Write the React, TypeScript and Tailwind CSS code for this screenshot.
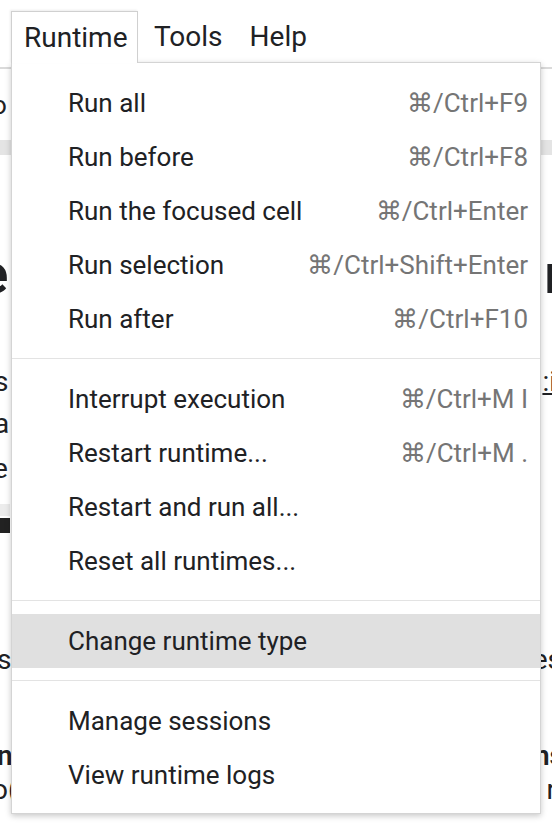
import React from "react";

type Item = { label: string; shortcut?: string; active?: boolean };

const groups: Item[][] = [
  [
    { label: "Run all", shortcut: "⌘/Ctrl+F9" },
    { label: "Run before", shortcut: "⌘/Ctrl+F8" },
    { label: "Run the focused cell", shortcut: "⌘/Ctrl+Enter" },
    { label: "Run selection", shortcut: "⌘/Ctrl+Shift+Enter" },
    { label: "Run after", shortcut: "⌘/Ctrl+F10" },
  ],
  [
    { label: "Interrupt execution", shortcut: "⌘/Ctrl+M I" },
    { label: "Restart runtime...", shortcut: "⌘/Ctrl+M ." },
    { label: "Restart and run all..." },
    { label: "Reset all runtimes..." },
  ],
  [{ label: "Change runtime type", active: true }],
  [{ label: "Manage sessions" }, { label: "View runtime logs" }],
];

function Row({ left, right, className }: { left?: React.ReactNode; right?: React.ReactNode; className: string }) {
  return (
    <div className={`flex justify-between items-center text-[#202124] ${className}`}>
      <div>{left}</div>
      <div>{right}</div>
    </div>
  );
}

export default function App() {
  return (
    <div className="relative w-[552px] h-[828px] overflow-hidden bg-white font-['Roboto','Liberation_Sans',sans-serif]">
      {/* background page */}
      <div className="flex flex-col">
        <div className="h-[69px] border-b-[2px] border-[#dadada] flex items-start pl-[11px] pt-[11px]">
          <div className="relative z-20 h-[52px] w-[127px] bg-white border border-b-0 border-[#d0d0d0] shadow-[-1px_-1px_2px_rgba(0,0,0,0.08)] flex items-center pl-[12px] text-[28px] text-[#202124] leading-none">
            Runtime
          </div>
          <div className="h-[51px] flex items-center ml-[16px] text-[28px] text-[#202124] leading-none">Tools</div>
          <div className="h-[51px] flex items-center ml-[27px] text-[28px] text-[#202124] leading-none">Help</div>
        </div>
        <div className="h-[23px]" />
        <Row className="h-[26px] text-[26px] leading-none" left={<span className="-ml-[8px]">o</span>} />
        <div className="h-[22px]" />
        <div className="h-[15px] bg-[#e4e4e4]" />
        <div className="h-[97px]" />
        <Row
          className="h-[44px] text-[56px] font-bold leading-none"
          left={<span className="block -ml-[22px]">e</span>}
          right={<span className="block -mr-[24px]">n</span>}
        />
        <div className="h-[73px]" />
        <Row
          className="h-[26px] text-[28px] leading-none"
          left={<span className="block -ml-[6px]">s</span>}
          right={<span className="block -mr-[4px] underline">:i</span>}
        />
        <div className="h-[16px]" />
        <Row className="h-[26px] text-[28px] leading-none" left={<span className="block -ml-[6px]">a</span>} />
        <div className="h-[19px]" />
        <Row className="h-[26px] text-[28px] leading-none" left={<span className="block -ml-[7px]">e</span>} />
        <div className="h-[22px]" />
        <div className="h-[12px] w-[10px] bg-[#ececec]" />
        <div className="h-[2px]" />
        <div className="h-[15px] w-[10px] bg-[#222222]" />
        <div className="h-[114px]" />
        <Row
          className="h-[26px] text-[28px] leading-none"
          left={<span className="block -ml-[3px]">sc</span>}
          right={<span className="block -mr-[10px]">es</span>}
        />
        <div className="h-[70px]" />
        <Row
          className="h-[26px] text-[28px] font-semibold leading-none"
          left={<span className="block -ml-[3px]">ng</span>}
          right={<span className="block -mr-[12px]">ns</span>}
        />
        <div className="h-[8px]" />
        <Row
          className="h-[26px] text-[28px] leading-none"
          left={<span className="block -ml-[8px]">o(</span>}
          right={<span className="block -mr-[4px]">r</span>}
        />
      </div>

      {/* dropdown menu */}
      <div className="absolute z-10 left-[11px] top-[62px] w-[530px] bg-white border border-[#d4d4d4] shadow-[0_2px_6px_rgba(0,0,0,0.22)] pt-[13px] pb-[11px]">
        {groups.map((g, gi) => (
          <div key={gi}>
            {gi > 0 && <div className="mt-[12px] mb-[13px] h-px bg-[#e3e3e3]" />}
            {g.map((it) => (
              <div
                key={it.label}
                className={`h-[54px] flex items-center justify-between pl-[56px] pr-[12px] text-[26px] leading-none ${
                  it.active ? "bg-[#e0e0e0]" : ""
                }`}
              >
                <span className="text-[#202124]">{it.label}</span>
                {it.shortcut && <span className="text-[#757575]">{it.shortcut}</span>}
              </div>
            ))}
          </div>
        ))}
      </div>
    </div>
  );
}
